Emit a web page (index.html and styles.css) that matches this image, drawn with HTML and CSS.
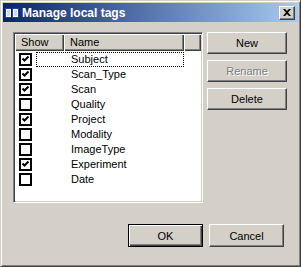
FILE: index.html
```html
<!DOCTYPE html>
<html lang="en">
<head>
    <meta charset="UTF-8">
    <title>Manage local tags</title>
    <link rel="stylesheet" href="styles.css">
</head>
<body>
    <div class="window">
        <div class="titlebar">
            <svg class="app-icon" width="16" height="16" viewBox="0 0 16 16">
                <path d="M1 3 H7 L8 4 L9 3 H15 V13 H9 L8 14 L7 13 H1 Z" fill="#1c3fa8"/>
                <path d="M2 4 H7 V12 H2 Z" fill="#ffffff"/>
                <path d="M9 4 H14 V12 H9 Z" fill="#ffffff"/>
                <path d="M7.5 4 V13" stroke="#0a1c5a" stroke-width="1"/>
                <path d="M3 6 H6 M3 8 H6 M3 10 H6 M10 6 H13 M10 8 H13 M10 10 H13" stroke="#9fb4e6" stroke-width="1"/>
                <path d="M6 14 H10 V15 H6 Z" fill="#0a1c5a"/>
            </svg>
            <span class="title">Manage local tags</span>
            <div class="close-btn">
                <svg width="8" height="7" viewBox="0 0 8 7">
                    <path d="M0 0 H2 L4 2 L6 0 H8 L5 3.5 L8 7 H6 L4 5 L2 7 H0 L3 3.5 Z" fill="#000"/>
                </svg>
            </div>
        </div>

        <div class="content">
            <div class="top">
                <div class="listview">
                    <div class="lv-header">
                        <div class="col col-show">Show</div>
                        <div class="col col-name">Name</div>
                        <div class="col col-fill"></div>
                    </div>
                    <ul class="lv-rows">
                        <li class="row">
                            <span class="check"><svg width="9" height="9" viewBox="0 0 9 9"><path d="M1.5 3.5 L3.5 5.5 L7.5 1.5" stroke="#000" stroke-width="2" fill="none"/></svg></span>
                            <span class="name focus">Subject</span>
                        </li>
                        <li class="row">
                            <span class="check"><svg width="9" height="9" viewBox="0 0 9 9"><path d="M1.5 3.5 L3.5 5.5 L7.5 1.5" stroke="#000" stroke-width="2" fill="none"/></svg></span>
                            <span class="name">Scan_Type</span>
                        </li>
                        <li class="row">
                            <span class="check"><svg width="9" height="9" viewBox="0 0 9 9"><path d="M1.5 3.5 L3.5 5.5 L7.5 1.5" stroke="#000" stroke-width="2" fill="none"/></svg></span>
                            <span class="name">Scan</span>
                        </li>
                        <li class="row">
                            <span class="check"></span>
                            <span class="name">Quality</span>
                        </li>
                        <li class="row">
                            <span class="check"><svg width="9" height="9" viewBox="0 0 9 9"><path d="M1.5 3.5 L3.5 5.5 L7.5 1.5" stroke="#000" stroke-width="2" fill="none"/></svg></span>
                            <span class="name">Project</span>
                        </li>
                        <li class="row">
                            <span class="check"></span>
                            <span class="name">Modality</span>
                        </li>
                        <li class="row">
                            <span class="check"></span>
                            <span class="name">ImageType</span>
                        </li>
                        <li class="row">
                            <span class="check"><svg width="9" height="9" viewBox="0 0 9 9"><path d="M1.5 3.5 L3.5 5.5 L7.5 1.5" stroke="#000" stroke-width="2" fill="none"/></svg></span>
                            <span class="name">Experiment</span>
                        </li>
                        <li class="row">
                            <span class="check"></span>
                            <span class="name">Date</span>
                        </li>
                    </ul>
                </div>
                <div class="side-buttons">
                    <button class="btn">New</button>
                    <button class="btn" disabled>Rename</button>
                    <button class="btn">Delete</button>
                </div>
            </div>
            <div class="bottom">
                <button class="btn btn-default">OK</button>
                <button class="btn">Cancel</button>
            </div>
        </div>
    </div>
</body>
</html>
```

FILE: styles.css
```css
body {
    margin: 0;
    font-family: "Liberation Sans", Arial, sans-serif;
    font-size: 11px;
    color: #000;
}

/* Ventana */
.window {
    box-sizing: border-box;
    width: 301px;
    height: 267px;
    background-color: #d4d0c8;
    border: 1px solid;
    border-color: #d4d0c8 #404040 #404040 #d4d0c8;
    box-shadow: inset 1px 1px #fff, inset -1px -1px #808080;
    padding: 2px;
}
.titlebar {
    height: 19px;
    display: flex;
    align-items: center;
    background: linear-gradient(to right, #0a246a, #a6caf0);
    padding-left: 1px;
    padding-right: 3px;
}
.app-icon {
    flex: none;
}
.title {
    margin-left: 2px;
    flex: 1;
    color: #fff;
    font-weight: bold;
    font-size: 12px;
}
.close-btn {
    box-sizing: border-box;
    width: 16px;
    height: 14px;
    display: flex;
    align-items: center;
    justify-content: center;
    background-color: #d4d0c8;
    border: 1px solid;
    border-color: #fff #404040 #404040 #fff;
    box-shadow: inset -1px -1px #808080;
}

/* Contenido */
.content {
    padding: 10px 0 0 10px;
}
.top {
    display: flex;
    gap: 4px;
}
.listview {
    box-sizing: border-box;
    width: 190px;
    height: 171px;
    background-color: #fff;
    border: 1px solid;
    border-color: #808080 #fff #fff #808080;
    box-shadow: inset 1px 1px #404040, inset -1px -1px #d4d0c8;
    padding: 1px;
}
.lv-header {
    display: flex;
    height: 17px;
}
.col {
    box-sizing: border-box;
    background-color: #d4d0c8;
    box-shadow: inset 1px 1px #fff, inset -1px -1px #404040, inset -2px -2px #808080;
    padding-left: 6px;
    line-height: 16px;
}
.col-show {
    width: 49px;
}
.col-name {
    width: 120px;
}
.col-fill {
    flex: 1;
}
.lv-rows {
    list-style: none;
    margin: 0;
    padding: 1px 0 0 0;
}
.row {
    display: flex;
    align-items: center;
    height: 15px;
}
.check {
    box-sizing: border-box;
    width: 13px;
    height: 13px;
    margin-left: 4px;
    border: 2px solid #000;
    background-color: #fff;
    display: flex;
    align-items: center;
    justify-content: center;
}
.name {
    box-sizing: border-box;
    margin-left: 4px;
    width: 148px;
    height: 15px;
    line-height: 13px;
    padding-left: 34px;
    border: 1px solid transparent;
}
.focus {
    border: 1px dotted #000;
}

/* Botones */
.side-buttons {
    display: flex;
    flex-direction: column;
    gap: 6px;
}
.btn {
    box-sizing: border-box;
    width: 80px;
    height: 22px;
    font-family: "Liberation Sans", Arial, sans-serif;
    font-size: 11px;
    color: #000;
    background-color: #d4d0c8;
    border: 1px solid;
    border-color: #fff #404040 #404040 #fff;
    box-shadow: inset -1px -1px #808080;
    padding: 0;
    margin: 0;
}
.btn:disabled {
    color: #808080;
    text-shadow: 1px 1px #fff;
}
.bottom {
    display: flex;
    justify-content: flex-end;
    gap: 6px;
    margin-top: 21px;
    padding-right: 14px;
}
.bottom .btn {
    width: 75px;
    height: 23px;
}
.btn-default {
    border: 1px solid #000;
    box-shadow: inset 1px 1px #fff, inset -1px -1px #404040, inset -2px -2px #808080;
}
```
